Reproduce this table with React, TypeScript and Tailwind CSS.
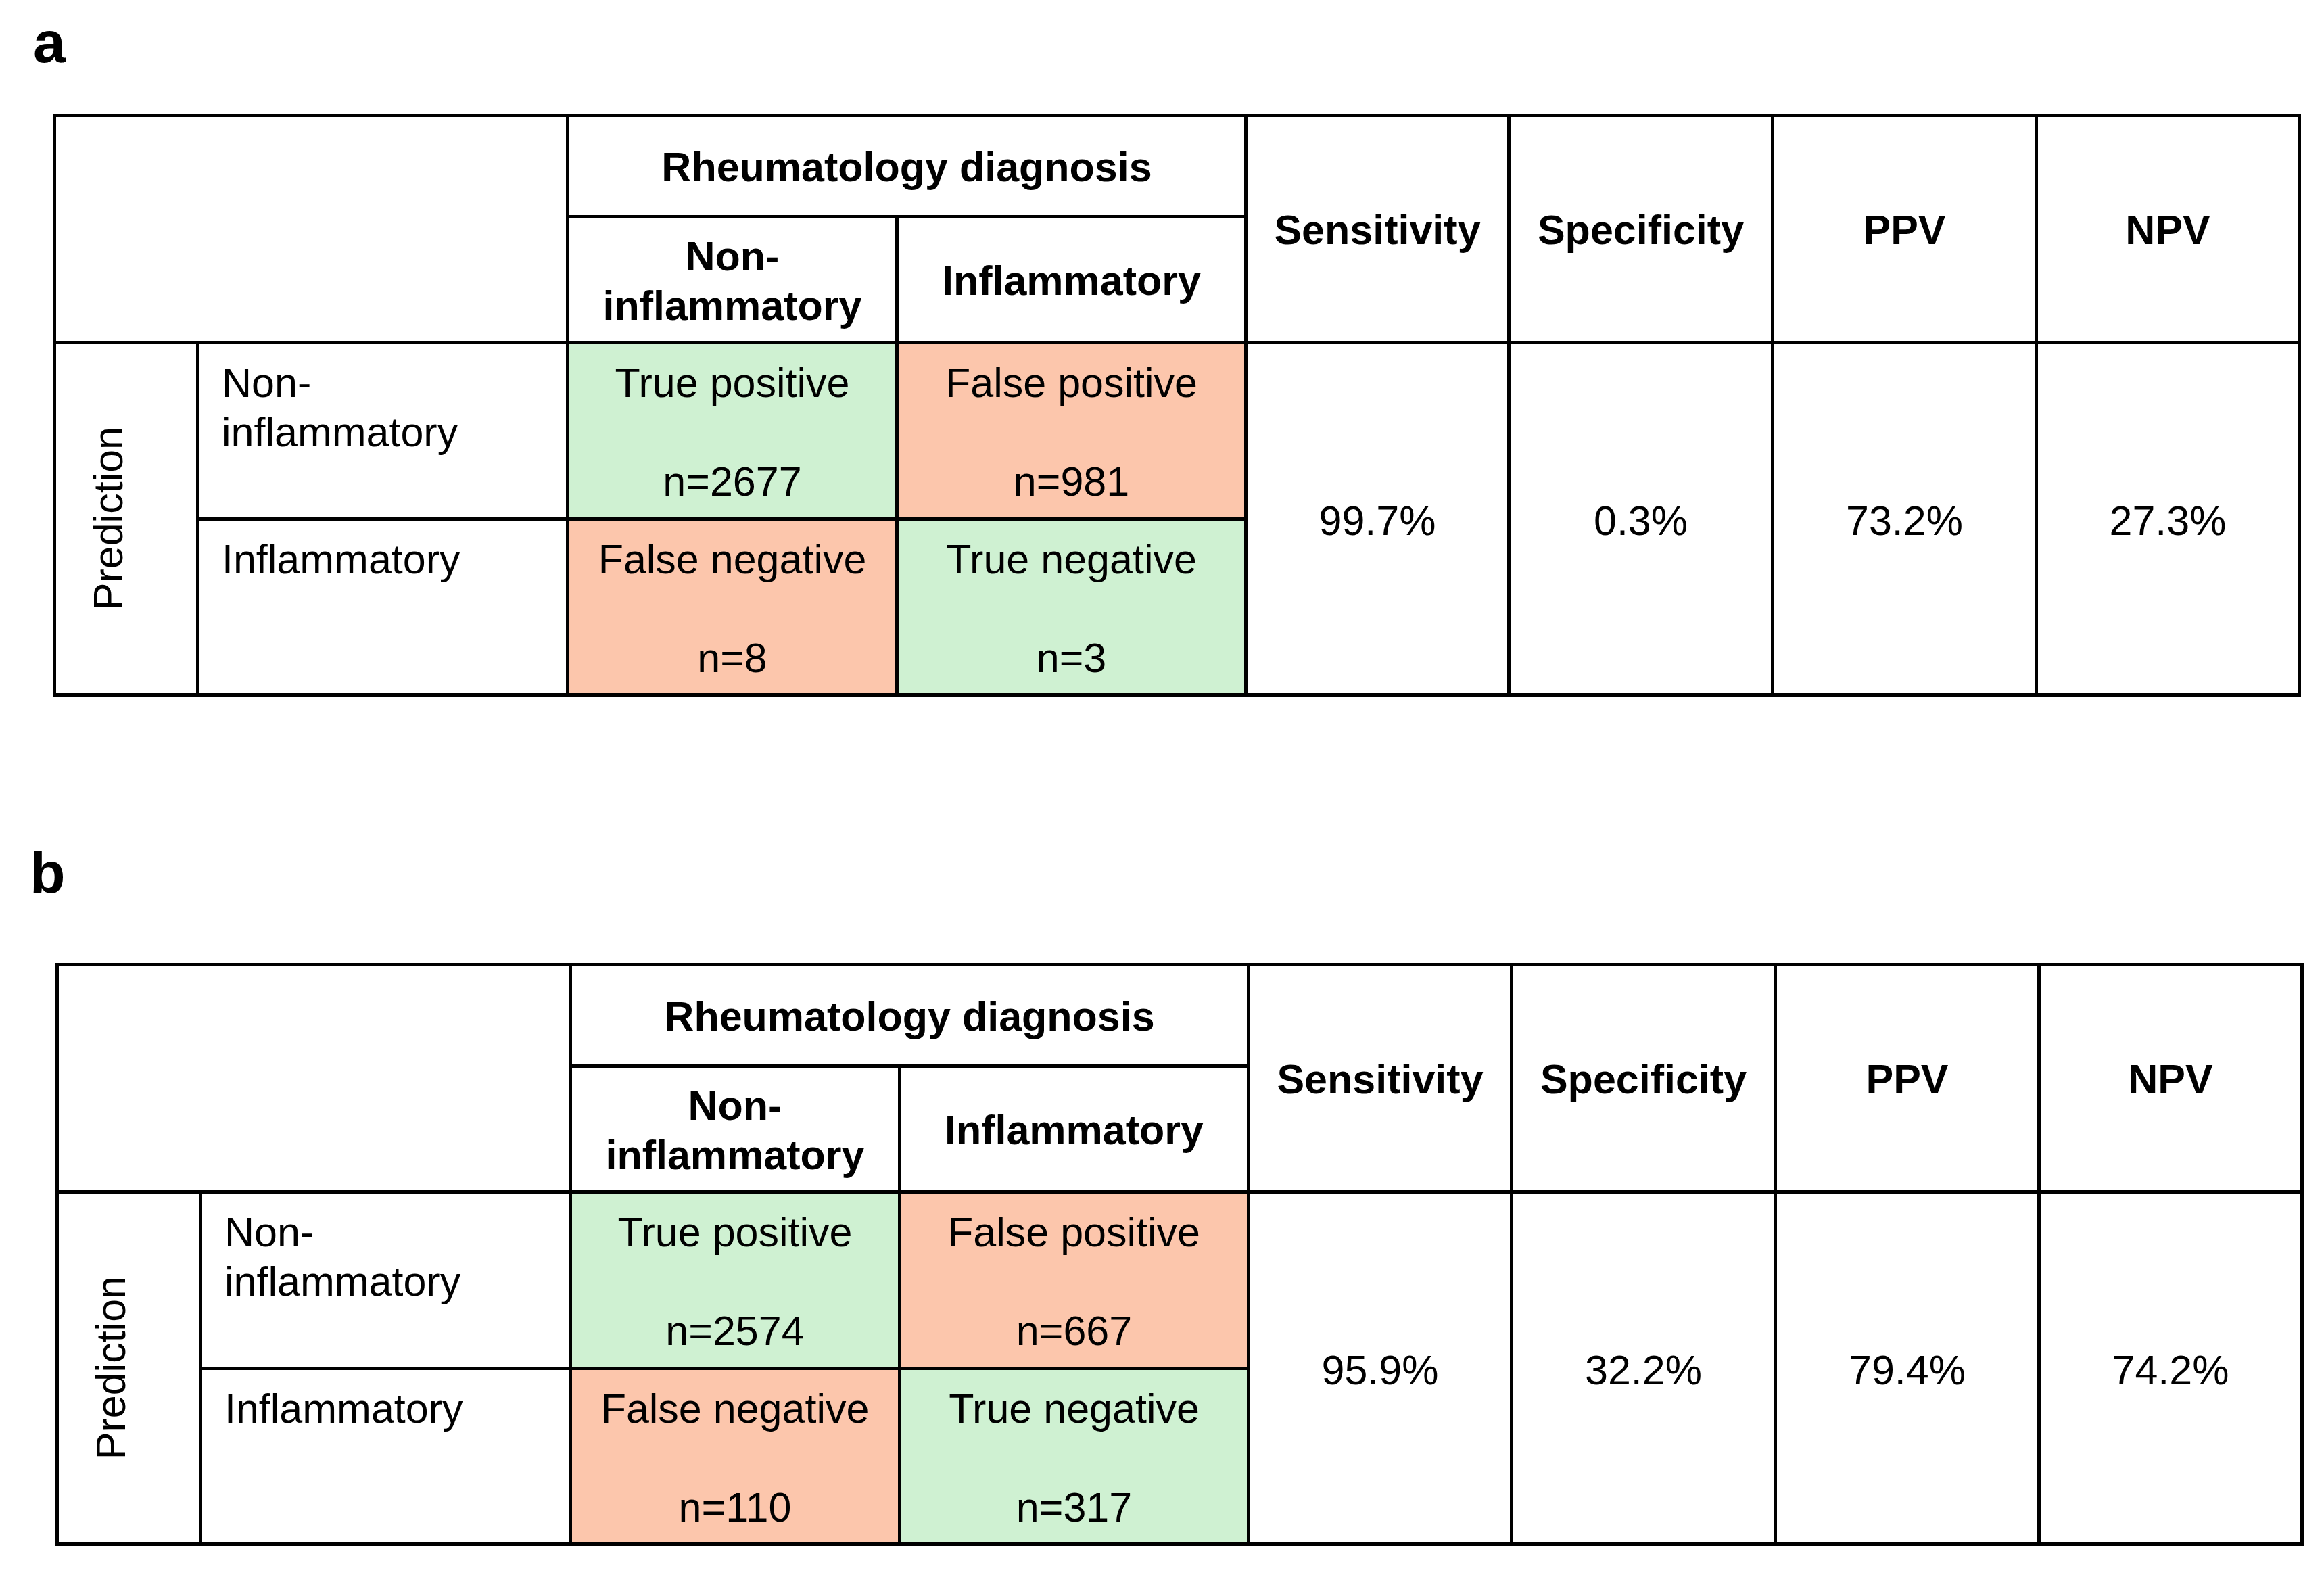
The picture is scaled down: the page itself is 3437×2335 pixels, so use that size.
import React from "react";

type TableData = {
  tp: string;
  fp: string;
  fn: string;
  tn: string;
  values: string[];
};

const metricHeads = ["Sensitivity", "Specificity", "PPV", "NPV"];

function ConfusionTable({ d }: { d: TableData }) {
  return (
    <div className="grid w-max grid-cols-[207px_542px_482px_511px_384px_385px_385px_384px] grid-rows-[145px_181px_256px_255px] gap-[5px] bg-black p-[5px] text-[61px] leading-[1.2] text-black">
      {/* top-left empty */}
      <div className="col-span-2 row-span-2 bg-white" />
      <div className="col-span-2 flex items-center justify-center bg-white pt-[5px] font-bold">
        Rheumatology diagnosis
      </div>
      {metricHeads.map((h) => (
        <div key={h} className="row-span-2 flex items-center justify-center bg-white pt-[5px] font-bold">
          {h}
        </div>
      ))}
      <div className="flex flex-col items-center justify-center bg-white pt-[5px] text-center font-bold">
        <div>Non-</div>
        <div>inflammatory</div>
      </div>
      <div className="flex items-center justify-center bg-white pt-[5px] font-bold">Inflammatory</div>

      {/* body */}
      <div className="row-span-2 flex items-center justify-center bg-white pr-[52px]">
        <span className="-rotate-90 whitespace-nowrap">Prediction</span>
      </div>
      <div className="bg-white pl-[33px] pt-[21px]">
        <div>Non-</div>
        <div>inflammatory</div>
      </div>
      <div className="flex flex-col items-center bg-[#cff1d2] pt-[21px]">
        <div>True positive</div>
        <div className="mt-[73px]">n={d.tp}</div>
      </div>
      <div className="flex flex-col items-center bg-[#fcc6ac] pt-[21px]">
        <div>False positive</div>
        <div className="mt-[73px]">n={d.fp}</div>
      </div>
      {d.values.map((v, i) => (
        <div key={i} className="row-span-2 flex items-center justify-center bg-white pt-[7px]">
          {v}
        </div>
      ))}
      <div className="bg-white pl-[33px] pt-[21px]">Inflammatory</div>
      <div className="flex flex-col items-center bg-[#fcc6ac] pt-[21px]">
        <div>False negative</div>
        <div className="mt-[73px]">n={d.fn}</div>
      </div>
      <div className="flex flex-col items-center bg-[#cff1d2] pt-[21px]">
        <div>True negative</div>
        <div className="mt-[73px]">n={d.tn}</div>
      </div>
    </div>
  );
}

const tableA: TableData = {
  tp: "2677",
  fp: "981",
  fn: "8",
  tn: "3",
  values: ["99.7%", "0.3%", "73.2%", "27.3%"],
};

const tableB: TableData = {
  tp: "2574",
  fp: "667",
  fn: "110",
  tn: "317",
  values: ["95.9%", "32.2%", "79.4%", "74.2%"],
};

export default function App() {
  return (
    <div className="h-[2335px] w-[3437px] bg-white pt-[19px] font-['Liberation_Sans',Arial,sans-serif] text-black">
      <div className="h-[86px] pl-[49px] text-[86px] font-bold leading-none">a</div>
      <div className="ml-[78px] mt-[63px]">
        <ConfusionTable d={tableA} />
      </div>
      <div className="mt-[217px] h-[86px] pl-[44px] text-[86px] font-bold leading-none">b</div>
      <div className="ml-[82px] mt-[91px]">
        <ConfusionTable d={tableB} />
      </div>
    </div>
  );
}
